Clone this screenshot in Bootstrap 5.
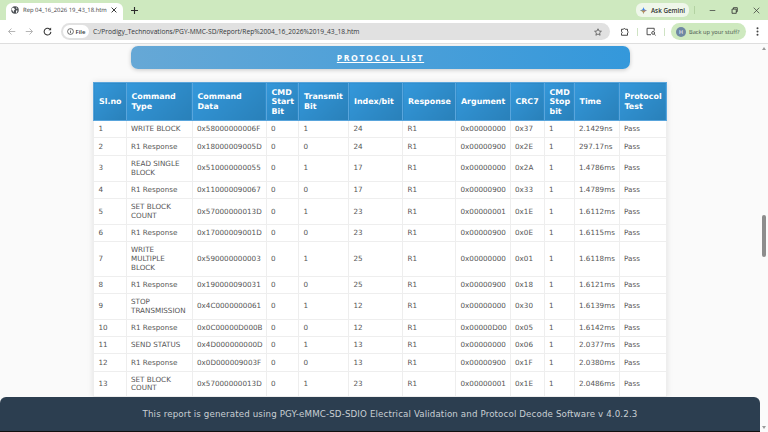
<!DOCTYPE html>
<html lang="en">

<head>
    <meta charset="UTF-8">
    <meta name="viewport" content="width=device-width, initial-scale=1.0">
    <title>Rep 04_16_2026 19_43_18.htm</title>
    <link href="https://cdn.jsdelivr.net/npm/bootstrap@5.3.0/dist/css/bootstrap.min.css" rel="stylesheet">
    <style>
        html, body { height: 100%; overflow: hidden; }
        body { font-family: "Liberation Sans", Arial, sans-serif; background: #fafafa; }
        .shell { height: 432px; }

        /* browser chrome */
        .tabstrip { height: 20px; background: #cee9bf; padding-left: 6px; }
        .tab-item { width: 117px; height: 17px; margin-top: 3px; background: #fff; border-radius: 6px 6px 0 0; font-size: 6.6px; color: #3c4043; padding: 0 6px 3px 5px; }
        .tab-title { font-family: "Open Sans", sans-serif; font-size: 5.9px; text-rendering: geometricPrecision; }
        .newtab { margin-left: 8px; color: #2c2c2c; }
        .gemini { height: 14px; width: 53px; margin-right: 5px; background: #eff7ea; border-radius: 6px; font: 600 6.3px "Open Sans", sans-serif; color: #2f3430; }
        .sep-v { width: 1px; height: 8px; background: #b3d2a2; }
        .win-btns { gap: 15px; padding: 0 8px 0 14px; }
        .toolbar { height: 24px; background: #fff; border-bottom: 1px solid #dedede; padding: 3px 0 3px 7px; }
        .nav-icons { gap: 9px; width: 54px; }
        .omni { width: 167px; flex: 1 1 auto; height: 17px; background: #e1e1e1; border-radius: 9px; padding-left: 2px; font: 6.65px "Open Sans", sans-serif; color: #33373a; margin-right: 10px; }
        .file-chip { height: 13px; width: 26px; background: #fff; border-radius: 7px; font-weight: 600; font-size: 6px; gap: 2px; margin-right: 4px; }
        .tool-sep { width: 1px; height: 8px; background: #cfe3c4; }
        .backup { width: 75px; height: 17px; background: #cee9bf; border-radius: 9px; font: 5.7px "Open Sans", sans-serif; text-rendering: geometricPrecision; color: #46504a; gap: 3px; padding-left: 5px; margin-left: 6px; }
        .avatar { width: 10px; height: 10px; border-radius: 50%; background: #6f88a2; color: #fff; font-size: 5.5px; }
        .kebab { width: 22px; }

        /* report page */
        .viewport { height: 388px; background: #fafafa; overflow: hidden; }
        .page { width: 760px; height: 388px; }
        .list-banner { width: 499px; height: 23px; margin: 2px 0 13px 131px; border-radius: 7px; background: linear-gradient(90deg, #66a8d6, #3498db); box-shadow: 0 1px 4px rgba(0,0,0,.2); color: #fff; font: 700 8.6px "Open Sans", sans-serif; letter-spacing: 1.6px; text-decoration: underline; }
        .proto { width: 573px; margin-left: 93px; table-layout: fixed; border-collapse: collapse; background: #fff; box-shadow: 0 0 6px rgba(0,0,0,.1); font-family: "DejaVu Sans", Verdana, sans-serif; }
        .proto th { background: linear-gradient(135deg, #3498db, #2980b9); color: #fff; font-size: 7.9px; line-height: 9.5px; font-weight: 700; padding: 4.6px 5px 4.1px; border: 1px solid #59a5dc; vertical-align: middle; text-align: left; }
        .proto td { color: #555; font-size: 7.2px; line-height: 8.6px; padding: 4.3px 4.5px 3.4px; border: 1px solid #eee; vertical-align: middle; }
        .c-sl { width: 32.5px; } .c-type { width: 66px; } .c-data { width: 74px; } .c-start { width: 32.5px; }
        .c-tx { width: 50px; } .c-idx { width: 54px; } .c-resp { width: 53px; } .c-arg { width: 54.5px; }
        .c-crc { width: 34px; } .c-stop { width: 30px; } .c-time { width: 45px; } .c-test { width: 47.5px; }

        .report-foot { left: 0; right: 8px; bottom: 1px; height: 34px; padding-left: 20px; background: #2c3e50; border-radius: 6px 6px 0 0; color: #c9cfd4; font: 8.7px "DejaVu Sans", Verdana, sans-serif; letter-spacing: .12px; }
        .blackline { left: 0; right: 8px; bottom: 0; height: 1px; background: #111; }

        /* scrollbar */
        .scroll-rail { width: 8px; background: #fbfbfb; }
        .scroll-thumb { left: 2px; top: 171px; width: 4px; height: 42px; background: #8d8d8d; border-radius: 2px; }
        .arrow-up, .arrow-dn { left: 2px; width: 0; height: 0; border-left: 2px solid transparent; border-right: 2px solid transparent; }
        .arrow-up { top: 3px; border-bottom: 3px solid #9a9a9a; }
        .arrow-dn { bottom: 3px; border-top: 3px solid #9a9a9a; }
    </style>
</head>

<body>
    <div class="shell d-flex flex-column">
        <div class="tabstrip d-flex align-items-center">
            <div class="tab-item d-flex align-items-center">
                <svg width="8" height="8" viewBox="0 0 16 16" class="flex-shrink-0 me-1"><circle cx="8" cy="8" r="7.5" fill="#4d5156"/><path d="M3 3l3 1 2 3-2 2-1 4-2-4-2-2zM10 2l3 3-2 1zM10 9l3 0-1 4-2 1z" fill="#fff"/></svg>
                <span class="tab-title flex-grow-1 text-nowrap">Rep 04_16_2026 19_43_18.htm</span>
                <svg width="6" height="6" viewBox="0 0 10 10"><path d="M1 1l8 8M9 1l-8 8" stroke="#333" stroke-width="1.6"/></svg>
            </div>
            <svg class="newtab" width="7" height="7" viewBox="0 0 10 10"><path d="M5 0v10M0 5h10" stroke="#2c2c2c" stroke-width="1.6"/></svg>
            <div class="ms-auto d-flex align-items-center">
                <div class="gemini d-flex align-items-center justify-content-center gap-1">
                    <svg width="7" height="7" viewBox="0 0 16 16"><path d="M8 0C8.6 4.5 11.500 7.400 16 8 11.500 8.600 8.600 11.500 8 16 7.400 11.500 4.500 8.600 0 8 4.500 7.400 7.400 4.500 8 0z" fill="#3f83e8"/><path d="M8 8h8C11.500 8.600 8.600 11.500 8 16z" fill="#e8803c"/><path d="M0 8h8v8C7.400 11.500 4.500 8.600 0 8z" fill="#d8a52c"/></svg>
                    <span>Ask Gemini</span>
                </div>
                <div class="sep-v"></div>
                <div class="win-btns d-flex align-items-center">
                    <svg width="7" height="7" viewBox="0 0 10 10"><path d="M1 5h8" stroke="#333" stroke-width="1"/></svg>
                    <svg width="7" height="7" viewBox="0 0 10 10"><path d="M1.500 3h6v6h-6zM3.500 3V1h5.500v5.500H7.500" fill="none" stroke="#333" stroke-width="1.200"/></svg>
                    <svg width="7" height="7" viewBox="0 0 10 10"><path d="M1 1l8 8M9 1l-8 8" stroke="#333" stroke-width="1"/></svg>
                </div>
            </div>
        </div>

        <div class="toolbar d-flex align-items-center">
            <div class="nav-icons d-flex align-items-center flex-shrink-0">
                <svg width="9" height="9" viewBox="0 0 12 12"><path d="M11 6H2M6 2L2 6l4 4" fill="none" stroke="#b4b4b4" stroke-width="1.300"/></svg>
                <svg width="9" height="9" viewBox="0 0 12 12"><path d="M1 6h9M6 2l4 4-4 4" fill="none" stroke="#b4b4b4" stroke-width="1.300"/></svg>
                <svg width="9" height="9" viewBox="0 0 12 12"><path d="M10.500 6.500A4.500 4.500 0 1 1 9 2.800" fill="none" stroke="#333" stroke-width="1.400"/><path d="M10.800 .8v3.500H7.300z" fill="#333"/></svg>
            </div>
            <div class="omni d-flex align-items-center">
                <div class="file-chip d-flex align-items-center justify-content-center flex-shrink-0">
                    <svg width="7" height="7" viewBox="0 0 12 12"><circle cx="6" cy="6" r="5" fill="none" stroke="#333" stroke-width="1.200"/><path d="M6 5.200v3.500M6 3v1.200" stroke="#333" stroke-width="1.200"/></svg>
                    <span>File</span>
                </div>
                <span class="flex-grow-1 text-nowrap">C:/Prodigy_Technovations/PGY-MMC-SD/Report/Rep%2004_16_2026%2019_43_18.htm</span>
                <svg class="me-2 flex-shrink-0" width="8" height="8" viewBox="0 0 16 16"><path d="M8 1.500l2 4.500 4.800.5-3.600 3.200 1 4.800L8 12l-4.200 2.500 1-4.800L1.200 6.500 6 6z" fill="none" stroke="#444" stroke-width="1.400"/></svg>
            </div>
            <svg class="flex-shrink-0" width="9" height="9" viewBox="0 0 12 12"><path d="M2 3h2.500a1.300 1.300 0 0 1 2.500 0h3v2.500a1.300 1.300 0 0 1 0 2.500V11H2V8.500a1.300 1.300 0 0 0 0-2.500z" fill="none" stroke="#333" stroke-width="1.200"/></svg>
            <div class="tool-sep mx-2 flex-shrink-0"></div>
            <svg class="flex-shrink-0" width="10" height="9" viewBox="0 0 14 12"><path d="M7 10.500H1.500V1.500h10V5" fill="none" stroke="#333" stroke-width="1.200"/><circle cx="10" cy="8" r="2" fill="none" stroke="#333" stroke-width="1.200"/><path d="M11.500 9.500l2 2" stroke="#333" stroke-width="1.200"/></svg>
            <div class="tool-sep ms-2 flex-shrink-0"></div>
            <div class="backup d-flex align-items-center flex-shrink-0">
                <span class="avatar d-flex align-items-center justify-content-center flex-shrink-0">H</span>
                <span class="text-nowrap">Back up your stuff?</span>
            </div>
            <div class="kebab d-flex justify-content-center flex-shrink-0">
                <svg width="3" height="9" viewBox="0 0 3 9"><circle cx="1.500" cy="1.200" r="1" fill="#444"/><circle cx="1.500" cy="4.500" r="1" fill="#444"/><circle cx="1.500" cy="7.800" r="1" fill="#444"/></svg>
            </div>
        </div>

        <div class="viewport d-flex position-relative">
            <div class="page flex-shrink-0">
                <div class="list-banner d-flex align-items-center justify-content-center">PROTOCOL LIST</div>
                <table class="proto">
                    <colgroup>
                        <col class="c-sl"><col class="c-type"><col class="c-data"><col class="c-start"><col class="c-tx"><col class="c-idx">
                        <col class="c-resp"><col class="c-arg"><col class="c-crc"><col class="c-stop"><col class="c-time"><col class="c-test">
                    </colgroup>
                    <thead>
                        <tr><th>Sl.no</th><th>Command Type</th><th>Command Data</th><th>CMD Start Bit</th><th>Transmit Bit</th><th>Index/bit</th><th>Response</th><th>Argument</th><th>CRC7</th><th>CMD Stop bit</th><th>Time</th><th>Protocol Test</th></tr>
                    </thead>
                    <tbody id="rows"></tbody>
                </table>
            </div>
            <div class="scroll-rail position-relative flex-grow-1">
                <div class="arrow-up position-absolute"></div>
                <div class="scroll-thumb position-absolute"></div>
                <div class="arrow-dn position-absolute"></div>
            </div>
            <div class="report-foot position-absolute d-flex align-items-center justify-content-center">This report is generated using PGY-eMMC-SD-SDIO Electrical Validation and Protocol Decode Software v 4.0.2.3</div>
            <div class="blackline position-absolute"></div>
        </div>
    </div>

    <script src="https://cdn.jsdelivr.net/npm/bootstrap@5.3.0/dist/js/bootstrap.bundle.min.js"></script>
    <script>
        const data = [
            ['WRITE BLOCK', '0x58000000006F', 0, 1, 24, '0x00000000', '0x37', '2.1429ns'],
            ['R1 Response', '0x18000009005D', 0, 0, 24, '0x00000900', '0x2E', '297.17ns'],
            ['READ SINGLE BLOCK', '0x510000000055', 0, 1, 17, '0x00000000', '0x2A', '1.4786ms'],
            ['R1 Response', '0x110000090067', 0, 0, 17, '0x00000900', '0x33', '1.4789ms'],
            ['SET BLOCK COUNT', '0x57000000013D', 0, 1, 23, '0x00000001', '0x1E', '1.6112ms'],
            ['R1 Response', '0x17000009001D', 0, 0, 23, '0x00000900', '0x0E', '1.6115ms'],
            ['WRITE MULTIPLE BLOCK', '0x590000000003', 0, 1, 25, '0x00000000', '0x01', '1.6118ms'],
            ['R1 Response', '0x190000090031', 0, 0, 25, '0x00000900', '0x18', '1.6121ms'],
            ['STOP TRANSMISSION', '0x4C0000000061', 0, 1, 12, '0x00000000', '0x30', '1.6139ms'],
            ['R1 Response', '0x0C00000D000B', 0, 0, 12, '0x00000D00', '0x05', '1.6142ms'],
            ['SEND STATUS', '0x4D000000000D', 0, 1, 13, '0x00000000', '0x06', '2.0377ms'],
            ['R1 Response', '0x0D000009003F', 0, 0, 13, '0x00000900', '0x1F', '2.0380ms'],
            ['SET BLOCK COUNT', '0x57000000013D', 0, 1, 23, '0x00000001', '0x1E', '2.0486ms']
        ];
        document.getElementById('rows').innerHTML = data.map(function (r, i) {
            return '<tr><td>' + (i + 1) + '</td><td>' + r[0] + '</td><td>' + r[1] + '</td><td>' + r[2] + '</td><td>' + r[3] + '</td><td>' + r[4] +
                '</td><td>R1</td><td>' + r[5] + '</td><td>' + r[6] + '</td><td>1</td><td>' + r[7] + '</td><td>Pass</td></tr>';
        }).join('');
    </script>
</body>

</html>
